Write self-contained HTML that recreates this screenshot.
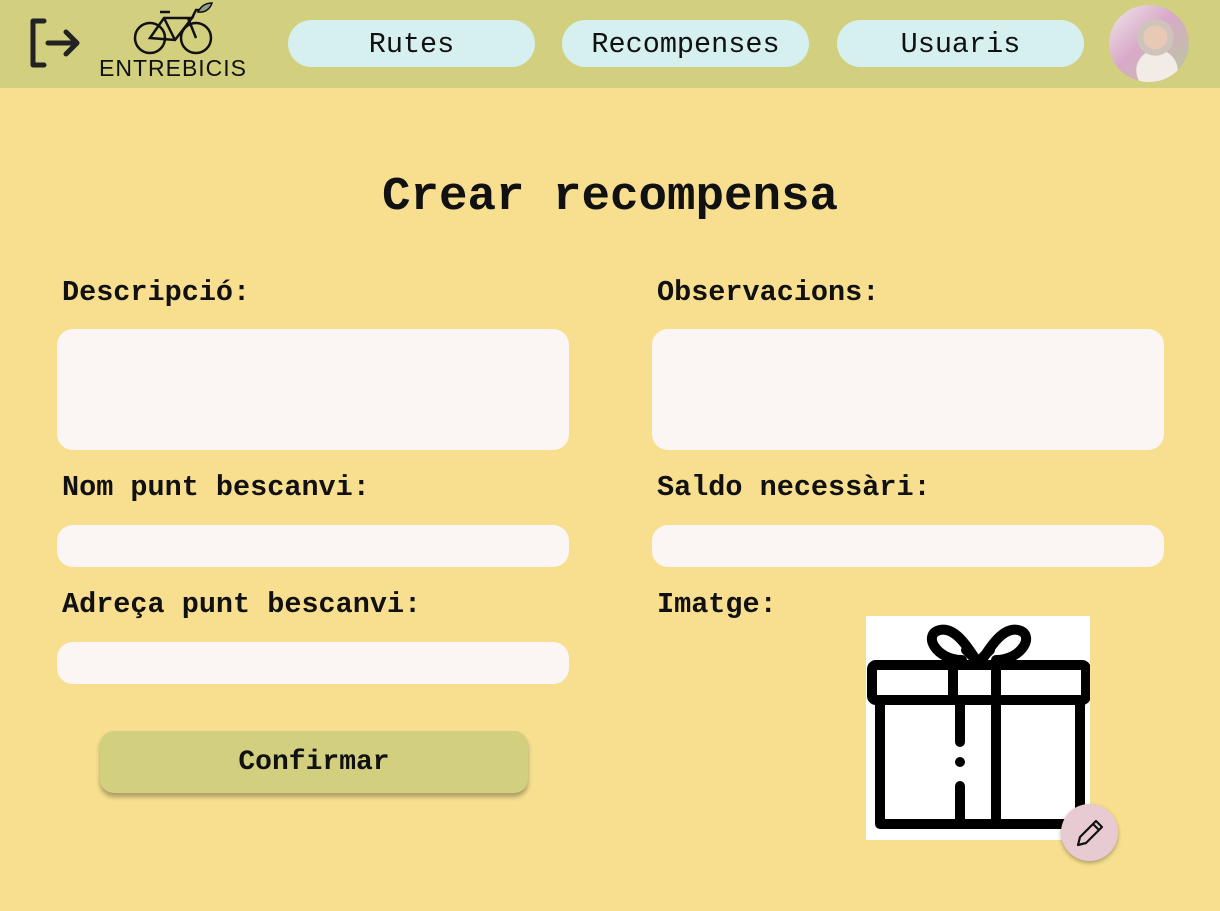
<!DOCTYPE html>
<html><head><meta charset="utf-8"><style>
*{margin:0;padding:0;box-sizing:border-box}
body{width:1220px;height:911px;background:#f7df8f;font-family:"Liberation Mono",monospace;position:relative;overflow:hidden}
.hdr{position:absolute;left:0;top:0;width:1220px;height:88px;background:#d2cf7e}
.pill{position:absolute;top:20px;height:47px;width:247px;border-radius:24px;background:#d6f0ef;font-size:28.5px;text-align:center;line-height:50px;color:#111}
h1{position:absolute;top:170px;left:0;width:1220px;text-align:center;font-size:47.5px;font-weight:bold;color:#111}
.lbl{position:absolute;font-size:28.5px;font-weight:bold;color:#111}
.in{position:absolute;background:#fbf6f4;border-radius:16px;width:512px}
.btn{position:absolute;left:100px;top:731px;width:428px;height:62px;background:#d2cf7e;border-radius:14px;box-shadow:0 4px 5px rgba(0,0,0,.3);text-align:center;line-height:64px;font-size:28px;font-weight:bold;color:#111}
</style></head><body>
<div class="hdr">
<svg style="position:absolute;left:28px;top:18px" width="54" height="50" viewBox="0 0 54 50" fill="none" stroke="#222" stroke-width="5" stroke-linecap="round" stroke-linejoin="round"><path d="M16 3H5v44h11"/><path d="M20 25h28M38 14l11 11-11 11"/></svg>
<svg style="position:absolute;left:130px;top:2px" width="86" height="54" viewBox="0 0 86 54" fill="none" stroke="#111" stroke-width="2.5"><circle cx="20" cy="36" r="15"/><circle cx="66" cy="36" r="15"/><path d="M20 36L34 16h28L45 38zM30 10h10M62 16l4-8h6M66 36L58 16M45 38L34 16"/><path d="M68 10c4-8 10-9 14-9-2 6-7 10-14 9z" fill="#8aa08a" stroke="#111" stroke-width="1.5"/></svg>
<div style="position:absolute;left:99px;top:55px;font-family:'Liberation Sans',sans-serif;font-size:23px;letter-spacing:1px;color:#111">ENTREBICIS</div>
<div class="pill" style="left:288px">Rutes</div>
<div class="pill" style="left:562px">Recompenses</div>
<div class="pill" style="left:837px">Usuaris</div>
<div style="position:absolute;left:1109px;top:5px;width:80px;height:77px;border-radius:50%;background:radial-gradient(circle at 58% 42%,#e8c9b5 0 18%,#cfc4bb 19% 28%,transparent 29%),radial-gradient(circle at 60% 85%,#f2ece6 0 25%,transparent 26%),linear-gradient(135deg,#f0e6ea,#d9a9c9 45%,#b6c99a)"></div>
</div>
<h1>Crear recompensa</h1>
<div class="lbl" style="left:62px;top:276px">Descripció:</div>
<div class="lbl" style="left:657px;top:276px">Observacions:</div>
<div class="in" style="left:57px;top:329px;height:121px"></div>
<div class="in" style="left:652px;top:329px;height:121px"></div>
<div class="lbl" style="left:62px;top:471px">Nom punt bescanvi:</div>
<div class="lbl" style="left:657px;top:471px">Saldo necessàri:</div>
<div class="in" style="left:57px;top:525px;height:42px"></div>
<div class="in" style="left:652px;top:525px;height:42px"></div>
<div class="lbl" style="left:62px;top:588px">Adreça punt bescanvi:</div>
<div class="lbl" style="left:657px;top:588px">Imatge:</div>
<div class="in" style="left:57px;top:642px;height:42px"></div>
<div class="btn">Confirmar</div>
<svg style="position:absolute;left:866px;top:616px" width="224" height="224" viewBox="0 0 224 224"><rect width="224" height="224" fill="#fff"/><g fill="none" stroke="#000" stroke-width="10" stroke-linecap="round" stroke-linejoin="round"><rect x="6" y="49" width="214" height="35" rx="4"/><path d="M14 84v124h200V84"/><path d="M87 49v35M130 49v35M94 84v42M94 170v38M130 84v124"/><path d="M96 44C70 44 56 18 74 14c14-3 26 14 36 30M116 44c10-16 22-33 36-30 18 4 4 30-22 30"/><path d="M100 34l12 12 12-12"/></g><circle cx="94" cy="146" r="5" fill="#000"/></svg>
<div style="position:absolute;left:1061px;top:804px;width:57px;height:57px;border-radius:50%;background:#e8cbd2;box-shadow:0 2px 4px rgba(0,0,0,.3)"></div>
<svg style="position:absolute;left:1072px;top:815px" width="36" height="36" viewBox="0 0 36 36" fill="none" stroke="#111" stroke-width="2.2" stroke-linejoin="round"><path d="M6 30l2-8L24 6l6 6-16 16z M21 9l6 6"/></svg>
</body></html>
